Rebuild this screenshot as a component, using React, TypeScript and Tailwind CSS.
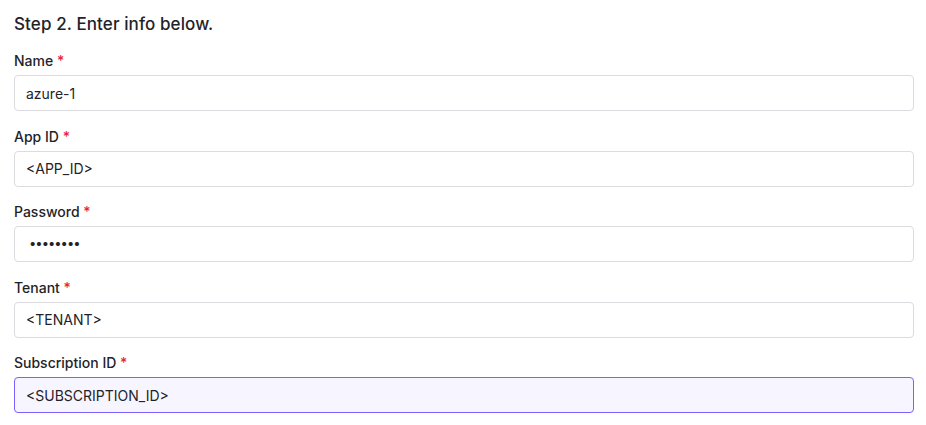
const fields = [
  { id: "name", label: "Name", value: "azure-1" },
  { id: "appId", label: "App ID", value: "<APP_ID>" },
  { id: "password", label: "Password", value: "••••••••" },
  { id: "tenant", label: "Tenant", value: "<TENANT>" },
  { id: "subscription", label: "Subscription ID", value: "<SUBSCRIPTION_ID>", focused: true },
];

export default function App() {
  return (
    <div className="min-h-screen bg-white px-[14px] pt-[12px] text-[#1f2328]" style={{ fontFamily: "Inter, 'Noto Sans', sans-serif" }}>
      <h2 className="text-[17px] font-medium leading-6 tracking-[0.1px]">Step 2. Enter info below.</h2>
      <div className="mt-[15px] flex w-[900px] flex-col gap-[15.5px]">
        {fields.map((f) => (
          <div key={f.id} className="flex flex-col">
            <label className="text-[14px] font-medium leading-5">
              {f.label} <span className="text-[#e5243b]">*</span>
            </label>
            <div
              className={
                "mt-1 flex h-9 items-center rounded-[4px] border px-[11px] text-[14px] " +
                (f.focused ? "border-[#7b61ff] bg-[#f7f5ff]" : "border-[#dcdce0] bg-white")
              }
            >
              <span className={f.id === "password" ? "pl-[3px] text-[13px] tracking-[-1px]" : ""}>{f.value}</span>
            </div>
          </div>
        ))}
      </div>
    </div>
  );
}
